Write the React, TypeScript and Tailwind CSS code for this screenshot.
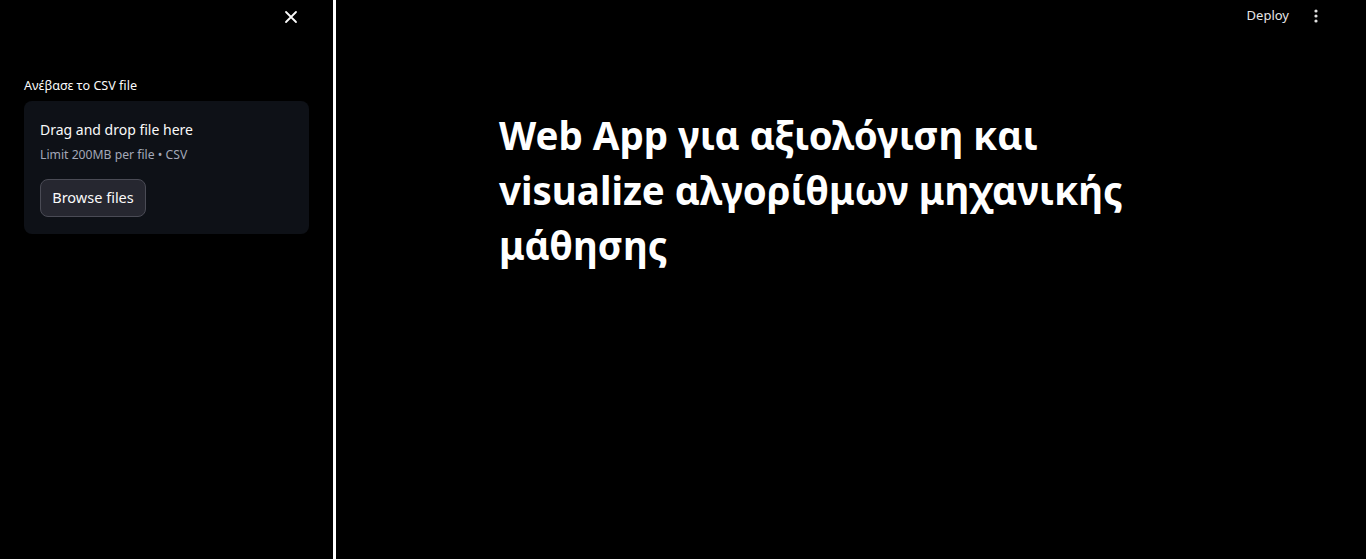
import React from "react";

export default function App() {
  const font = { fontFamily: '"Noto Sans", "DejaVu Sans", sans-serif' };
  return (
    <div className="flex h-[559px] w-[1366px] overflow-hidden bg-black text-[#fafafa]" style={font}>
      <aside className="flex w-[333px] shrink-0 flex-col bg-black px-6">
        <div className="flex h-[34px] items-center justify-end pr-[11px] pt-[0px]">
          <svg width="14" height="14" viewBox="0 0 14 14" className="text-[#fafafa]">
            <path d="M2 2 L12 12 M12 2 L2 12" stroke="currentColor" strokeWidth="1.8" strokeLinecap="round" />
          </svg>
        </div>
        <div className="mt-[42px] text-[12.6px] leading-[20px] text-[#fafafa]">Ανέβασε το CSV file</div>
        <div className="mt-[5px] flex h-[133px] flex-col rounded-lg bg-[#0e1117] px-4 pt-[19px]">
          <div className="text-[14px] leading-[20px] text-[#fafafa]">Drag and drop file here</div>
          <div className="mt-[7px] text-[12.2px] leading-[16px] text-[#a3a8b8]">Limit 200MB per file • CSV</div>
          <div className="mt-[16px]">
            <button className="h-[38px] w-[106px] rounded-lg border border-[#4a4b55] bg-[#262730] text-[14.5px] text-[#fafafa]">
              Browse files
            </button>
          </div>
        </div>
      </aside>
      <div className="w-[3px] shrink-0 bg-white" />
      <main className="flex flex-1 flex-col">
        <header className="flex h-[32px] items-center justify-end pr-[48px] pt-[0px]">
          <span className="text-[13px] text-[#e6e6e6]">Deploy</span>
          <svg width="4" height="14" viewBox="0 0 4 14" className="ml-[25px] text-[#e0e0e0]">
            <circle cx="2" cy="2" r="1.6" fill="currentColor" />
            <circle cx="2" cy="7" r="1.6" fill="currentColor" />
            <circle cx="2" cy="12" r="1.6" fill="currentColor" />
          </svg>
        </header>
        <div className="ml-[163px] mt-[76px] w-[670px]">
          <h1 className="text-[38.5px] font-bold leading-[55px] text-white">
            Web App για αξιολόγιση και visualize αλγορίθμων μηχανικής μάθησης
          </h1>
        </div>
      </main>
    </div>
  );
}
